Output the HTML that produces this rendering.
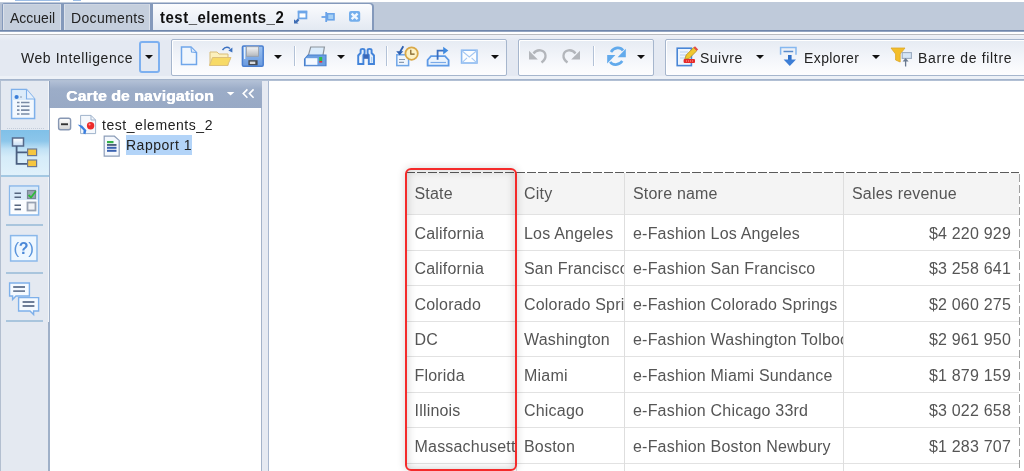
<!DOCTYPE html>
<html><head><meta charset="utf-8">
<style>
*{box-sizing:border-box;margin:0;padding:0}
html,body{width:1024px;height:471px;overflow:hidden;background:#fff;font-family:"Liberation Sans",sans-serif}
.a{position:absolute}
svg{position:absolute;overflow:visible}
/* top strip */
#tabbar{left:0;top:2px;width:1024px;height:28px;background:#bfcada}
.tab{top:4px;height:26px;background:#c5cfdd;border-left:1px solid #dbe1ea;border-right:1px solid #dbe1ea;border-top:1px solid #cdd5e2}
.tabt{font-size:14px;color:#222;top:10px;white-space:nowrap;transform:scaleY(1.07);transform-origin:0 12.7px}
#bline{left:0;top:30px;width:1024px;height:2px;background:linear-gradient(#6f86ab 50%,#93a5c2 50%)}
#wline{left:0;top:32px;width:1024px;height:2px;background:#fff}
#gline{left:0;top:34px;width:1024px;height:1px;background:#b9bbbf}
#toolbar{left:0;top:35px;width:1024px;height:44px;background:linear-gradient(#eef1f7,#e4e9f2 6px,#e4e9f2)}
.grp{top:39px;height:37px;border:1px solid #a6b6cd;border-radius:2px;background:linear-gradient(#e6ebf3,#f5f7fb 60%,#fdfdfe);box-shadow:inset 1px 1px 0 #fff}
.tt{font-size:14px;color:#222;top:50px;white-space:nowrap;transform:scaleY(1.05);transform-origin:0 12.7px}
.dd{width:0;height:0;border-left:4px solid transparent;border-right:4px solid transparent;border-top:4px solid #111}
.sep{top:46px;width:2px;height:20px;background:linear-gradient(90deg,#b3c2d7 50%,#fff 50%)}
#tline{left:0;top:79px;width:1024px;height:2px;background:linear-gradient(#9eafc8,#b8c5d8)}
/* left strip */
#lstrip{left:0;top:81px;width:49px;height:390px;background:#e4e9f1;border-left:1px solid #b3bfd0;border-right:1px solid #f2f5f9}
.lsep{left:6px;width:37px;height:2px;background:#a9c5dd}
/* nav */
#navhdr{left:49px;top:81px;width:213px;height:27px;background:linear-gradient(#b2c0d6,#9cadc8 8px,#98a9c5);border-left:1px solid #8fa1bd}
#navbody{left:49px;top:108px;width:213px;height:363px;background:#fff;border-left:1px solid #9fb0c8;border-right:1px solid #a4b3c9}
#splitter{left:262px;top:81px;width:7px;height:390px;background:#e6eaf2;border-right:1px solid #a9b8cf}
#main{left:269px;top:81px;width:755px;height:390px;background:#fff}
/* table */
.cell{font-size:16px;color:#555;white-space:nowrap;overflow:hidden;height:35px;line-height:35px;letter-spacing:0.2px}
</style></head><body><div id="root" style="position:absolute;left:0;top:0;width:1024px;height:471px;will-change:transform">
<div class="a" style="left:15px;top:0;width:45px;height:1px;background:#9cbde6"></div>
<div class="a" style="left:73px;top:0;width:8px;height:1px;background:#9cbde6"></div>
<div id="tabbar" class="a"></div>
<div class="a" style="left:2px;top:3px;width:372px;height:27px;background:#8499bb;border-radius:2px 4px 0 0"></div>
<div class="a" style="left:0;top:3px;width:2px;height:27px;background:#b3bfd2"></div>
<div class="a tab" style="left:3px;width:58px"></div>
<div class="a tabt" style="left:10px">Accueil</div>
<div class="a tab" style="left:64px;width:86px"></div>
<div class="a tabt" style="left:71px;letter-spacing:0.35px">Documents</div>
<div class="a" style="left:153px;top:4px;width:219px;height:26px;background:linear-gradient(#fbfcfe,#f1f4f9 40%,#e3e9f2);border-radius:0 3px 0 0"></div>
<div class="a tabt" style="left:160px;font-weight:bold;font-size:15px;color:#111;top:9px;letter-spacing:0.5px">test_elements_2</div>
<div id="bline" class="a"></div>
<div id="wline" class="a"></div>
<div id="gline" class="a"></div>
<div id="toolbar" class="a"></div>
<div class="a" style="left:0;top:76px;width:1024px;height:3px;background:#edf1f7"></div>
<div class="a tt" style="left:21px;letter-spacing:0.56px">Web Intelligence</div>
<div class="a" style="left:139px;top:41px;width:21px;height:32px;border:2px solid #7db0f0;border-radius:3px"></div>
<div class="a dd" style="left:145px;top:55px"></div>
<div class="a grp" style="left:171px;width:336px"></div>
<div class="a grp" style="left:518px;width:136px"></div>
<div class="a grp" style="left:665px;width:400px"></div>
<div class="a dd" style="left:274px;top:55px"></div>
<div class="a sep" style="left:294px"></div>
<div class="a dd" style="left:337px;top:55px"></div>
<div class="a sep" style="left:386px"></div>
<div class="a dd" style="left:491px;top:55px"></div>
<div class="a sep" style="left:593px"></div>
<div class="a dd" style="left:637px;top:55px"></div>
<div class="a tt" style="left:700px;letter-spacing:0.5px">Suivre</div>
<div class="a dd" style="left:756px;top:55px"></div>
<div class="a tt" style="left:804px;letter-spacing:0.4px">Explorer</div>
<div class="a dd" style="left:872px;top:55px"></div>
<div class="a tt" style="left:918px;letter-spacing:0.68px">Barre de filtre</div>
<div id="tline" class="a"></div>
<div id="lstrip" class="a"></div>
<div class="a" style="left:1px;top:130px;width:48px;height:47px;background:linear-gradient(#80c0e8,#8cc6ea 11px,#c0e1f5 19px,#d5ecf9 27px,#e0f1fb);border-bottom:2px solid #a3c8e3"></div>
<div class="a" style="left:7px;top:128px;width:38px;height:1px;background:repeating-linear-gradient(90deg,#c3ccd9 0 1px,transparent 1px 2px)"></div>
<div class="a lsep" style="top:224px"></div>
<div class="a lsep" style="top:272px"></div>
<div class="a lsep" style="top:320px"></div>
<div class="a" style="left:48px;top:322px;width:1px;height:149px;background:#9fb0c8"></div>
<div id="navhdr" class="a"></div>
<div class="a" style="left:66px;top:88px;font-size:14px;font-weight:bold;color:#fff;letter-spacing:0.1px;transform:scaleX(1.12);transform-origin:0 0;text-shadow:0.5px 0 0 #fff;white-space:nowrap">Carte de navigation</div>
<div id="navbody" class="a"></div>
<div class="a" style="left:102px;top:117px;font-size:14px;color:#222;white-space:nowrap;letter-spacing:0.55px">test_elements_2</div>
<div class="a" style="left:126px;top:135px;width:66px;height:20px;background:#b3d4f8"></div>
<div class="a" style="left:126px;top:137px;font-size:14px;color:#222;white-space:nowrap;letter-spacing:0.5px">Rapport 1</div>
<div id="splitter" class="a"></div>
<div id="main" class="a"></div>

<!-- table -->
<div class="a" style="left:406px;top:173px;width:613px;height:41px;background:#f4f4f4"></div>
<div class="a" style="left:406px;top:172px;width:613px;height:1px;background:repeating-linear-gradient(90deg,#5a5a5a 0 9px,transparent 9px 11px)"></div>
<div class="a" style="left:1019px;top:174px;width:1px;height:300px;background:repeating-linear-gradient(180deg,#a0a0a0 0 8px,transparent 8px 11px)"></div>
<div id="tbl">
<div class="a cell" style="left:414.5px;top:173px;width:101.5px;height:41px;line-height:41px">State</div>
<div class="a cell" style="left:524px;top:173px;width:100px;height:41px;line-height:41px">City</div>
<div class="a cell" style="left:633px;top:173px;width:210px;height:41px;line-height:41px">Store name</div>
<div class="a cell" style="left:852px;top:173px;width:167px;height:41px;line-height:41px">Sales revenue</div>
<div class="a cell" style="left:414.5px;top:217px;width:101.5px;height:33px;line-height:34px">California</div>
<div class="a cell" style="left:524px;top:217px;width:100px;height:33px;line-height:34px">Los Angeles</div>
<div class="a cell" style="left:633px;top:217px;width:210px;height:33px;line-height:34px">e-Fashion Los Angeles</div>
<div class="a cell" style="left:844px;top:217px;width:175px;height:33px;line-height:34px;text-align:right;padding-right:8px">$4 220 929</div>
<div class="a cell" style="left:414.5px;top:252px;width:101.5px;height:33px;line-height:33px">California</div>
<div class="a cell" style="left:524px;top:252px;width:100px;height:33px;line-height:33px">San Francisco</div>
<div class="a cell" style="left:633px;top:252px;width:210px;height:33px;line-height:33px">e-Fashion San Francisco</div>
<div class="a cell" style="left:844px;top:252px;width:175px;height:33px;line-height:33px;text-align:right;padding-right:8px">$3 258 641</div>
<div class="a cell" style="left:414.5px;top:288px;width:101.5px;height:33px;line-height:34px">Colorado</div>
<div class="a cell" style="left:524px;top:288px;width:100px;height:33px;line-height:34px">Colorado Springs</div>
<div class="a cell" style="left:633px;top:288px;width:210px;height:33px;line-height:34px">e-Fashion Colorado Springs</div>
<div class="a cell" style="left:844px;top:288px;width:175px;height:33px;line-height:34px;text-align:right;padding-right:8px">$2 060 275</div>
<div class="a cell" style="left:414.5px;top:323px;width:101.5px;height:33px;line-height:33px">DC</div>
<div class="a cell" style="left:524px;top:323px;width:100px;height:33px;line-height:33px">Washington</div>
<div class="a cell" style="left:633px;top:323px;width:210px;height:33px;line-height:33px">e-Fashion Washington Tolbooth</div>
<div class="a cell" style="left:844px;top:323px;width:175px;height:33px;line-height:33px;text-align:right;padding-right:8px">$2 961 950</div>
<div class="a cell" style="left:414.5px;top:359px;width:101.5px;height:33px;line-height:34px">Florida</div>
<div class="a cell" style="left:524px;top:359px;width:100px;height:33px;line-height:34px">Miami</div>
<div class="a cell" style="left:633px;top:359px;width:210px;height:33px;line-height:34px">e-Fashion Miami Sundance</div>
<div class="a cell" style="left:844px;top:359px;width:175px;height:33px;line-height:34px;text-align:right;padding-right:8px">$1 879 159</div>
<div class="a cell" style="left:414.5px;top:394px;width:101.5px;height:33px;line-height:33px">Illinois</div>
<div class="a cell" style="left:524px;top:394px;width:100px;height:33px;line-height:33px">Chicago</div>
<div class="a cell" style="left:633px;top:394px;width:210px;height:33px;line-height:33px">e-Fashion Chicago 33rd</div>
<div class="a cell" style="left:844px;top:394px;width:175px;height:33px;line-height:33px;text-align:right;padding-right:8px">$3 022 658</div>
<div class="a cell" style="left:414.5px;top:430px;width:101.5px;height:33px;line-height:34px">Massachusetts</div>
<div class="a cell" style="left:524px;top:430px;width:100px;height:33px;line-height:34px">Boston</div>
<div class="a cell" style="left:633px;top:430px;width:210px;height:33px;line-height:34px">e-Fashion Boston Newbury</div>
<div class="a cell" style="left:844px;top:430px;width:175px;height:33px;line-height:34px;text-align:right;padding-right:8px">$1 283 707</div>
<div class="a" style="left:406px;top:214px;width:613px;height:1px;background:#e2e2e2"></div>
<div class="a" style="left:406px;top:250px;width:613px;height:1px;background:#e2e2e2"></div>
<div class="a" style="left:406px;top:285px;width:613px;height:1px;background:#e2e2e2"></div>
<div class="a" style="left:406px;top:321px;width:613px;height:1px;background:#e2e2e2"></div>
<div class="a" style="left:406px;top:356px;width:613px;height:1px;background:#e2e2e2"></div>
<div class="a" style="left:406px;top:392px;width:613px;height:1px;background:#e2e2e2"></div>
<div class="a" style="left:406px;top:427px;width:613px;height:1px;background:#e2e2e2"></div>
<div class="a" style="left:406px;top:463px;width:613px;height:1px;background:#e2e2e2"></div>
<div class="a" style="left:516px;top:173px;width:1px;height:298px;background:#dedede"></div>
<div class="a" style="left:624px;top:173px;width:1px;height:298px;background:#dedede"></div>
<div class="a" style="left:843px;top:173px;width:1px;height:298px;background:#dedede"></div>
<div class="a" style="left:405px;top:168px;width:112px;height:303px;border:2px solid #f42a2a;border-radius:6px;box-shadow:0 0 8px rgba(0,0,0,.16),inset 0 0 10px rgba(0,0,0,.2)"></div>
</div>
<!-- ICONS -->
<svg class="a" style="left:0;top:0" width="1024" height="471" viewBox="0 0 1024 471">
<defs>
<linearGradient id="gFloppy" x1="0" y1="0" x2="0" y2="1"><stop offset="0" stop-color="#9cc2f0"/><stop offset="1" stop-color="#6a9be0"/></linearGradient>
<linearGradient id="gLabel" x1="0" y1="0" x2="0" y2="1"><stop offset="0" stop-color="#f6f6f6"/><stop offset="1" stop-color="#b4b8bd"/></linearGradient>
<linearGradient id="gRoot" x1="0" y1="0" x2="0" y2="1"><stop offset="0" stop-color="#ffffff"/><stop offset="1" stop-color="#c4dcf4"/></linearGradient>
<linearGradient id="gMinus" x1="0" y1="0" x2="0" y2="1"><stop offset="0" stop-color="#ffffff"/><stop offset="1" stop-color="#d4d4d4"/></linearGradient>
</defs>
<!-- tab icons -->
<g>
<rect x="298.6" y="11.6" width="7.8" height="6.8" fill="#fff" stroke="#6ea6e8" stroke-width="1.8"/>
<rect x="297.8" y="10.8" width="9.4" height="2.6" fill="#6ea6e8"/>
<polygon points="294,23.6 294,19.2 295.6,20.8 297.8,18.6 299.4,20.2 297.2,22.4 298.6,23.6" fill="#3f6db4"/>

<line x1="321.5" y1="17" x2="326" y2="17" stroke="#6aa3e8" stroke-width="1.8"/>
<rect x="325.3" y="12" width="1.8" height="10" fill="#6aa3e8"/>
<rect x="327.5" y="13.8" width="6.5" height="6" fill="#a6d0f5" stroke="#6aa3e8" stroke-width="1.6"/>
<rect x="349" y="11" width="11.2" height="10.8" rx="2" fill="#74aeec"/>
<path d="M351.6,13.6 L357.6,19.2 M357.6,13.6 L351.6,19.2" stroke="#f0f7ff" stroke-width="2.4"/>
</g>
<!-- toolbar icons -->
<g>
<path d="M181.5,47 H191 L196.5,52.5 V64.5 H181.5 Z" fill="#f0f6fd" stroke="#6fa6ea" stroke-width="1.5"/>
<path d="M191,47.5 L191.5,52 L196,52.5" fill="#dfeafa" stroke="#6fa6ea" stroke-width="1.1"/>
<path d="M210,52 H217 L219,54 H228 V65.5 H210 Z" fill="#fcf0bc" stroke="#d8bc78" stroke-width="1"/>
<path d="M212.5,57.5 H231 L227.5,65.5 H209.5 Z" fill="#f7da66" stroke="#dcc07c" stroke-width="1"/>
<path d="M222.5,50 Q226,45.5 230,48.5" fill="none" stroke="#3a70c0" stroke-width="1.5"/>
<polygon points="228.4,50.6 232.4,47.4 232.4,52.4" fill="#3a70c0"/>
<rect x="242.4" y="46" width="20.8" height="20.2" rx="1.2" fill="url(#gFloppy)" stroke="#4a7fd0" stroke-width="1.5"/>
<rect x="246.5" y="46.8" width="12" height="9.5" fill="url(#gLabel)" stroke="#9a9ea6" stroke-width="0.8"/>
<rect x="244" y="47" width="1.3" height="12" fill="#e6f0fb"/>
<rect x="248.4" y="60.2" width="9.2" height="5" fill="#474b52"/>
<rect x="249.8" y="61.6" width="5.5" height="2.4" fill="#d8dadd"/>
<path d="M308.3,55.7 L310.7,47 H324.4 L322.9,55.7 Z" fill="#dcecfb" stroke="#8c939c" stroke-width="1.2"/>
<path d="M304.5,59 L308,55 H326 V65.8 H304.5 Z" fill="#6a9fe2" stroke="#4a80cc" stroke-width="1.1"/>
<rect x="305.8" y="58.2" width="11.6" height="6.6" fill="#f4f9ff"/>
<rect x="319.2" y="57" width="3" height="4" fill="#2ebd4a"/>
<rect x="319.2" y="61" width="3" height="1.6" fill="#e83030"/>
<path d="M358.2,64 V55.5 L360.6,53 V50.2 Q360.6,48.9 362.7,48.9 Q364.6,48.9 364.6,50.2 V53.5 L363.4,55 V64 Z" fill="#e4eefa" stroke="#4384da" stroke-width="1.9"/>
<path d="M374,64 V55.5 L371.6,53 V50.2 Q371.6,48.9 369.5,48.9 Q367.6,48.9 367.6,50.2 V53.5 L368.8,55 V64 Z" fill="#e4eefa" stroke="#4384da" stroke-width="1.9"/>
<rect x="363.6" y="54.2" width="5" height="4.6" fill="#3a68b8"/>
<line x1="360.3" y1="57" x2="360.3" y2="62.5" stroke="#fff" stroke-width="1"/>
<line x1="371.7" y1="57" x2="371.7" y2="62.5" stroke="#9cc8f4" stroke-width="1"/>
<rect x="396.8" y="54.8" width="11.8" height="10.8" fill="#f0f6fd" stroke="#6fa6e8" stroke-width="1.5"/>
<path d="M399,59.5 H405 M399,62.3 H404" stroke="#8a9ab0" stroke-width="1.2"/>
<line x1="403.3" y1="46.2" x2="400" y2="52" stroke="#2c5fb0" stroke-width="1.8"/>
<polygon points="396.2,51.3 403.3,51.3 399.7,55.2" fill="#2c5fb0"/>
<circle cx="411.6" cy="53.6" r="6.2" fill="#fdf2c6" stroke="#d9a848" stroke-width="1.8"/>
<path d="M410.8,49.8 V54.2 H414.6" fill="none" stroke="#7a5a20" stroke-width="1.2"/>
<path d="M427.6,65.6 V60 L431,56.2 H445 L448.6,60 V65.6 Z" fill="#eaf3fd" stroke="#5e9ae6" stroke-width="1.8"/>
<path d="M430.5,62.5 H446" stroke="#7aaae8" stroke-width="1.2"/>
<path d="M437.6,59.8 V50.6 H444" fill="none" stroke="#3a6fc0" stroke-width="1.8"/>
<polygon points="443.2,46.8 448.3,50.6 443.2,54.4" fill="#3f8ae0"/>
<rect x="461.6" y="50.2" width="15.4" height="12.8" fill="#fbfdff" stroke="#8ab8f0" stroke-width="1.6"/>
<path d="M461.6,50.5 L469.3,57 L477,50.5 M461.8,62.8 L467,57.8 M476.8,62.8 L471.6,57.8" fill="none" stroke="#a6c8f2" stroke-width="1.1"/>
<path d="M533.5,53.5 C537,48.5 545,49.5 545.5,55.5 C545.8,59 543.5,61 541.5,62.5" fill="none" stroke="#b3b6bb" stroke-width="2.3"/>
<polygon points="529,50.8 529,59.6 537.8,59.6" fill="#b3b6bb"/>
<g transform="translate(1109,0) scale(-1,1)">
<path d="M533.5,53.5 C537,48.5 545,49.5 545.5,55.5 C545.8,59 543.5,61 541.5,62.5" fill="none" stroke="#b3b6bb" stroke-width="2.3"/>
<polygon points="529,50.8 529,59.6 537.8,59.6" fill="#b3b6bb"/>
</g>
<path d="M611,52 C614,47 620.5,46.5 623,50.5" fill="none" stroke="#62aaec" stroke-width="2.6"/>
<polygon points="625.8,48.8 625.8,57.2 617.6,57.2" fill="#62aaec"/>
<path d="M622.3,61 C619,65.5 612.5,65.8 610.2,61.8" fill="none" stroke="#62aaec" stroke-width="2.6"/>
<polygon points="607.2,55 607.2,63.4 615.4,55" fill="#62aaec"/>
<rect x="677.2" y="48.2" width="14.2" height="17.4" fill="#eef5fd" stroke="#4a86d6" stroke-width="1.6"/>
<path d="M680,52 H688 M680,55 H686 M680,58 H685" stroke="#b8d0ee" stroke-width="1.2"/>
<path d="M684.8,59.2 L686.2,55 L693.6,47.6 L696.8,50.8 L689.4,58.2 Z" fill="#f0c830" stroke="#b08a20" stroke-width="0.8"/>
<path d="M693.6,47.6 L695,46.2 L698.2,49.4 L696.8,50.8 Z" fill="#e84848"/>
<rect x="683.6" y="59" width="11.4" height="4" rx="1" fill="#e62a2a"/>
<path d="M686,61 H693" stroke="#ffc0c0" stroke-width="0.8" stroke-dasharray="1 1"/>
<path d="M780.6,54.8 V47.6 H796 V54.8" fill="none" stroke="#86b8f0" stroke-width="1.5"/>
<path d="M783.5,51.5 H793.2" stroke="#5a8ccc" stroke-width="1.5"/>
<rect x="788" y="55" width="3.6" height="5" fill="#2f6fc8"/>
<polygon points="783.6,59.4 796,59.4 789.8,66" fill="#3d7ed6"/>
<path d="M891,48 H905 L900.2,54 V62 L895.6,60 V54 Z" fill="#f3be2a" stroke="#dca628" stroke-width="0.8"/>
<rect x="902.2" y="52.6" width="9.2" height="5.8" fill="#d6e6f6" stroke="#9aabc0" stroke-width="1.1"/>
<line x1="905.6" y1="66.5" x2="905.6" y2="59.5" stroke="#6a7a90" stroke-width="1.3"/>
<polygon points="902.6,61.5 905.6,58 908.6,61.5" fill="#6a7a90"/>
</g>
<!-- left strip icons -->
<g>
<path d="M11.6,89.6 H26.5 L34.6,99 V118.6 H11.6 Z" fill="#f3f8fe" stroke="#7eb0ea" stroke-width="1.5"/>
<path d="M12.4,90.4 H26 V100 H12.4 Z" fill="#dcecfa"/>
<path d="M26.5,89.6 V99 H34.6" fill="#e6f0fb" stroke="#7eb0ea" stroke-width="1.1"/>
<circle cx="16.6" cy="97" r="2.1" fill="#3a7ed8"/>
<path d="M20,97 H22" stroke="#8a98ac" stroke-width="1.2"/>
<path d="M17,102.5 H19.5 M21,102.5 H29.5 M17,106.3 H19.5 M21,106.3 H29.5 M17,110.1 H19.5 M21,110.1 H29.5 M17,114 H19.5 M21,114 H29.5" stroke="#7a8aa5" stroke-width="1.6"/>
<rect x="12.5" y="138" width="11" height="8" fill="url(#gRoot)" stroke="#56698a" stroke-width="1.5"/>
<path d="M16.6,146 V163.8 H27 M16.6,152.4 H27" fill="none" stroke="#4a5f80" stroke-width="1.8"/>
<rect x="27.6" y="149" width="9" height="6.6" fill="#f5c640" stroke="#6d7890" stroke-width="1.2"/>
<rect x="27.6" y="160" width="9" height="6.6" fill="#f5c640" stroke="#6d7890" stroke-width="1.2"/>
<rect x="9.6" y="186" width="29" height="29" fill="#fbfdff" stroke="#8ab8ea" stroke-width="1.5"/>
<rect x="10.4" y="187" width="27.4" height="13" fill="#d8e9f9"/>
<path d="M14.5,193.2 H21 M14.5,197.3 H21 M14.5,205.3 H21 M14.5,209.4 H21" stroke="#55657e" stroke-width="1.6"/>
<rect x="27.5" y="190.5" width="8" height="8" fill="#9aa5b5" stroke="#7a8698" stroke-width="1.2"/>
<path d="M28.5,195 L31,197.5 L35.8,191.2" fill="none" stroke="#2ebb3a" stroke-width="1.8"/>
<rect x="27.5" y="202.5" width="8" height="8" fill="#f0f2f5" stroke="#98a2b2" stroke-width="1.8"/>
<rect x="10.6" y="235.6" width="26.4" height="25.4" fill="#eef7ff" stroke="#8ab8ea" stroke-width="1.5"/>
<text x="13.4" y="253.6" font-family="Liberation Sans" font-size="17" fill="#5a94dc">(</text><text x="18.8" y="253.6" font-family="Liberation Sans" font-weight="bold" font-size="16" fill="#4a88d8">?</text><text x="28.2" y="253.6" font-family="Liberation Sans" font-size="17" fill="#5a94dc">)</text>
<path d="M9.6,283 H29.4 V296 H16 L12.6,299.6 V296 H9.6 Z" fill="#f5faff" stroke="#7eb0ea" stroke-width="1.4"/>
<path d="M13.2,287 H25 M13.2,291.2 H25" stroke="#6e7e98" stroke-width="1.8"/>
<path d="M18.6,297.6 H38.6 V311 H33.6 V314.6 L30,311 H18.6 Z" fill="#f5faff" stroke="#7eb0ea" stroke-width="1.4"/>
<path d="M22.6,302 H34.4 M22.6,306 H34.4" stroke="#6e7e98" stroke-width="1.8"/>
</g>
<!-- nav header -->
<polygon points="226.8,92 234.4,92 230.6,95.6" fill="#fff"/>
<path d="M247.4,89.4 L243.2,93.6 L247.4,97.8 M253.6,89.4 L249.4,93.6 L253.6,97.8" fill="none" stroke="#fff" stroke-width="1.6"/>
<!-- nav tree -->
<rect x="58.6" y="118.2" width="12" height="11.6" rx="2" fill="url(#gMinus)" stroke="#8797b3" stroke-width="1.4"/>
<rect x="61" y="123.3" width="7" height="1.9" fill="#333"/>
<path d="M80.6,115.4 H91 L95.6,120 V133.6 H80.6 Z" fill="#f5f8fc" stroke="#9fb3cc" stroke-width="1"/>
<path d="M91,115.4 V120 H95.6" fill="none" stroke="#9fb3cc" stroke-width="1"/>
<circle cx="90.6" cy="125.8" r="3.7" fill="#ec2a2a"/><circle cx="89.6" cy="124.6" r="1" fill="#ff9a9a"/>
<path d="M77.6,124.4 L82,125.6 L86.4,130.2 L85.4,134.2 L83.2,133.6 L83.6,130.4 Z" fill="#3b7fde"/>
<path d="M104.2,136.2 H114.4 L119.2,140.4 V156.2 H104.2 Z" fill="#f5f8fd" stroke="#8c9db8" stroke-width="1.2"/>
<rect x="107" y="141" width="6.5" height="2.2" fill="#35b24a"/>
<rect x="107" y="144.2" width="9.5" height="1.5" fill="#2a3a60"/>
<rect x="107" y="146.8" width="9.5" height="2" fill="#3a62b0"/>
<rect x="107" y="149.8" width="9.5" height="2" fill="#3a62b0"/>
</svg>

<!-- /ICONS -->
</div></body></html>
